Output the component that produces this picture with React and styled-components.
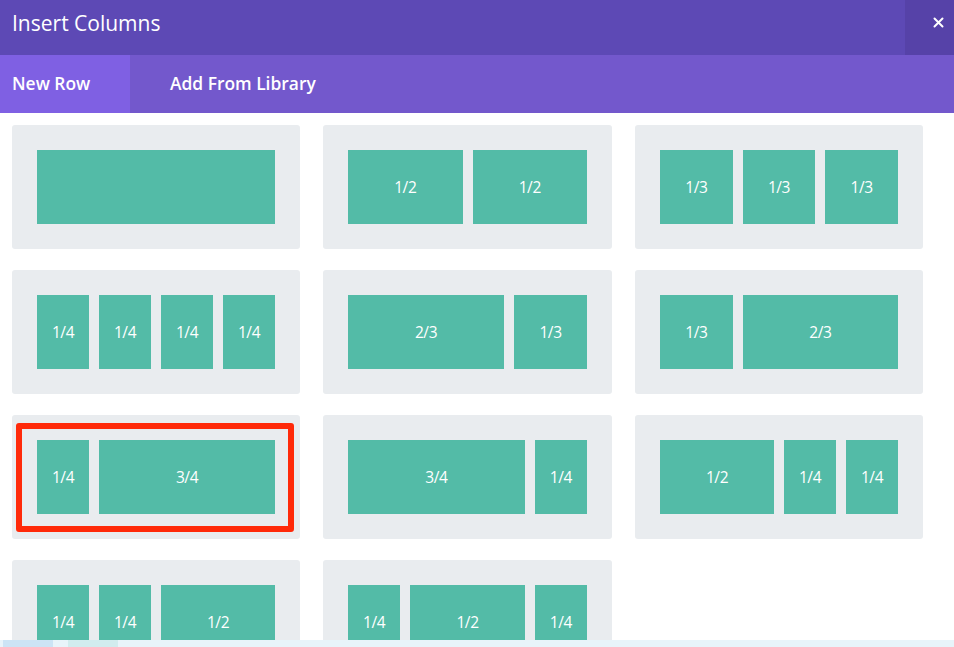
import React from "react";
import styled, { createGlobalStyle } from "styled-components";

const Global = createGlobalStyle`
  html, body { margin: 0; padding: 0; background: #fff; }
  body { font-family: "Open Sans", "Noto Sans", sans-serif; }
  * { box-sizing: border-box; }
`;

const Modal = styled.div`
  width: 954px;
  height: 647px;
  display: flex;
  flex-direction: column;
  overflow: hidden;
  background: #fff;
`;

const Header = styled.div`
  height: 55px;
  flex: none;
  display: flex;
  align-items: stretch;
  background: #5d49b5;
`;

const Title = styled.h1`
  flex: 1;
  margin: 0;
  padding: 8px 0 0 12px;
  font-size: 21px;
  font-weight: 400;
  color: #fff;
  line-height: 30px;
`;

const Close = styled.button`
  width: 49px;
  border: none;
  background: #5642a8;
  color: #fff;
  display: flex;
  align-items: center;
  justify-content: center;
  padding: 0 0 10px 18px;
  cursor: pointer;
`;

const Tabs = styled.div`
  height: 58px;
  flex: none;
  display: flex;
  background: #7358cc;
`;

const Tab = styled.div`
  display: flex;
  align-items: center;
  padding: 0 ${(p) => (p.$active ? "20px" : "22px")} 2px 12px;
  width: ${(p) => (p.$active ? "130px" : "auto")};
  margin-left: ${(p) => (p.$active ? "0" : "28px")};
  background: ${(p) => (p.$active ? "#7f60e3" : "transparent")};
  color: #fff;
  font-size: 17.4px;
  font-weight: 600;
  letter-spacing: 0;
`;

const Body = styled.div`
  flex: 1;
  overflow: hidden;
  padding: 12px 0 0 12px;
`;

const Grid = styled.div`
  display: grid;
  grid-template-columns: 288px 289px 288px;
  column-gap: 23px;
  row-gap: 21px;
`;

const Card = styled.div`
  position: relative;
  height: 124px;
  background: #e9ecef;
  border-radius: 3px;
  padding: 25px;
`;

const Layout = styled.div`
  display: grid;
  grid-template-columns: repeat(${(p) => p.$cols}, 1fr);
  column-gap: 10px;
  height: 74px;
`;

const Block = styled.div`
  grid-column: span ${(p) => p.$span};
  background: #53bba7;
  color: #fff;
  font-size: 15.5px;
  display: flex;
  align-items: center;
  justify-content: center;
  letter-spacing: -0.4px;
`;

const Highlight = styled.div`
  position: absolute;
  left: 4px;
  top: 8px;
  width: 278px;
  height: 109px;
  border: 6px solid #ff2a0a;
  border-radius: 3px;
  pointer-events: none;
`;

const Scrollbar = styled.div`
  height: 7px;
  flex: none;
  display: flex;
  background: #e8f4fa;
  padding-left: 3px;
  gap: 15px;
`;

const ScrollSeg = styled.div`
  width: 50px;
  background: ${(p) => p.$c};
`;

const rows = [
  { cols: 1, parts: [[1, ""]] },
  { cols: 2, parts: [[1, "1/2"], [1, "1/2"]] },
  { cols: 3, parts: [[1, "1/3"], [1, "1/3"], [1, "1/3"]] },
  { cols: 4, parts: [[1, "1/4"], [1, "1/4"], [1, "1/4"], [1, "1/4"]] },
  { cols: 3, parts: [[2, "2/3"], [1, "1/3"]] },
  { cols: 3, parts: [[1, "1/3"], [2, "2/3"]] },
  { cols: 4, parts: [[1, "1/4"], [3, "3/4"]], highlight: true },
  { cols: 4, parts: [[3, "3/4"], [1, "1/4"]] },
  { cols: 4, parts: [[2, "1/2"], [1, "1/4"], [1, "1/4"]] },
  { cols: 4, parts: [[1, "1/4"], [1, "1/4"], [2, "1/2"]] },
  { cols: 4, parts: [[1, "1/4"], [2, "1/2"], [1, "1/4"]] },
];

export default function App() {
  return (
    <>
      <Global />
      <Modal>
        <Header>
          <Title>Insert Columns</Title>
          <Close aria-label="Close">
            <svg width="11" height="11" viewBox="0 0 11 11">
              <path d="M1.5 1.5 L9.5 9.5 M9.5 1.5 L1.5 9.5" stroke="#fff" strokeWidth="2" strokeLinecap="round" />
            </svg>
          </Close>
        </Header>
        <Tabs>
          <Tab $active>New Row</Tab>
          <Tab>Add From Library</Tab>
        </Tabs>
        <Body>
          <Grid>
            {rows.map((r, i) => (
              <Card key={i}>
                <Layout $cols={r.cols}>
                  {r.parts.map(([span, label], j) => (
                    <Block key={j} $span={span}>{label}</Block>
                  ))}
                </Layout>
                {r.highlight && <Highlight />}
              </Card>
            ))}
          </Grid>
        </Body>
        <Scrollbar>
          <ScrollSeg $c="#cce4f5" />
          <ScrollSeg $c="#d1ecee" />
        </Scrollbar>
      </Modal>
    </>
  );
}
